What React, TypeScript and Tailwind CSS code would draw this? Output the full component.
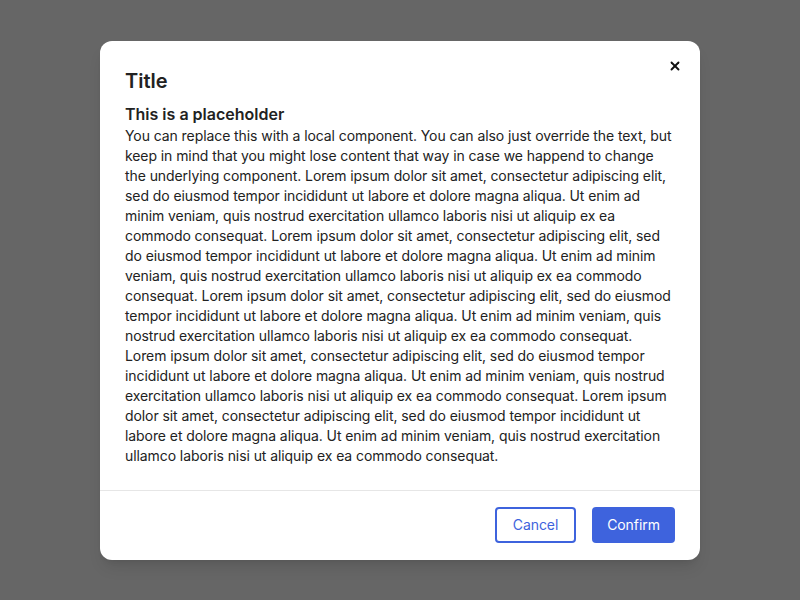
import { X } from 'lucide-react'

const BODY =
  'You can replace this with a local component. You can also just override the text, but keep in mind that you might lose content that way in case we happend to change the underlying component. Lorem ipsum dolor sit amet, consectetur adipiscing elit, sed do eiusmod tempor incididunt ut labore et dolore magna aliqua. Ut enim ad minim veniam, quis nostrud exercitation ullamco laboris nisi ut aliquip ex ea commodo consequat. Lorem ipsum dolor sit amet, consectetur adipiscing elit, sed do eiusmod tempor incididunt ut labore et dolore magna aliqua. Ut enim ad minim veniam, quis nostrud exercitation ullamco laboris nisi ut aliquip ex ea commodo consequat. Lorem ipsum dolor sit amet, consectetur adipiscing elit, sed do eiusmod tempor incididunt ut labore et dolore magna aliqua. Ut enim ad minim veniam, quis nostrud exercitation ullamco laboris nisi ut aliquip ex ea commodo consequat. Lorem ipsum dolor sit amet, consectetur adipiscing elit, sed do eiusmod tempor incididunt ut labore et dolore magna aliqua. Ut enim ad minim veniam, quis nostrud exercitation ullamco laboris nisi ut aliquip ex ea commodo consequat. Lorem ipsum dolor sit amet, consectetur adipiscing elit, sed do eiusmod tempor incididunt ut labore et dolore magna aliqua. Ut enim ad minim veniam, quis nostrud exercitation ullamco laboris nisi ut aliquip ex ea commodo consequat.'

export default function App() {
  return (
    <div className="w-[800px] h-[600px] bg-[#666666] flex items-start justify-center pt-[41px] font-['Inter',sans-serif]">
      <div className="w-[600px] bg-white rounded-xl shadow-lg flex flex-col">
        <div className="relative px-[25px] pt-[26px] pb-6">
          <button className="absolute top-[18px] right-[18px] text-[#111]" title="Close">
            <X size={14} strokeWidth={3.2} />
          </button>
          <h2 className="text-xl leading-7 font-semibold text-[#222] mb-[7px]">Title</h2>
          <h3 className="text-base leading-6 font-semibold text-[#222]">This is a placeholder</h3>
          <p className="text-sm leading-5 text-[#222] tracking-[-0.08px]">{BODY}</p>
        </div>
        <div className="border-t border-[#e6e6e6] px-[25px] pt-4 pb-[17px] flex justify-end gap-4 tracking-[-0.08px]">
          <button className="h-9 w-[81px] rounded border-2 border-[#3e63dd] text-[#3e63dd] text-sm">
            Cancel
          </button>
          <button className="h-9 w-[83px] rounded bg-[#3e63dd] text-white text-sm">
            Confirm
          </button>
        </div>
      </div>
    </div>
  )
}
